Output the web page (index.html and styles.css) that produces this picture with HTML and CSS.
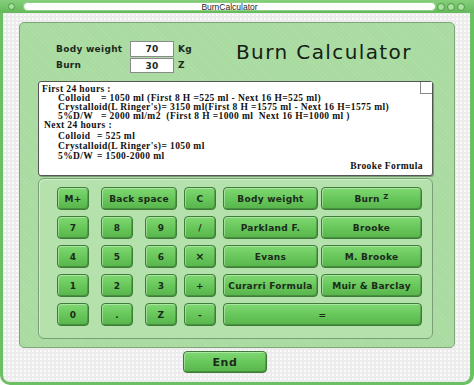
FILE: index.html
```html
<!DOCTYPE html>
<html>
<head>
<meta charset="utf-8">
<link rel="stylesheet" href="styles.css">
</head>
<body>
<div class="window">
  <div class="titlebar">
    <span class="dot"></span>
    <div class="title-pill">BurnCalculator</div>
    <div class="dots"><span class="dot"></span><span class="dot"></span><span class="dot"></span></div>
  </div>
  <div class="client">
    <div class="panel">
      <div class="top">
        <div class="fields">
          <div class="field"><span class="label">Body weight</span><span class="input">70</span><span class="unit">Kg</span></div>
          <div class="field"><span class="label">Burn</span><span class="input">30</span><span class="unit">Z</span></div>
        </div>
        <div class="app-title">Burn Calculator</div>
      </div>
      <div class="output">
        <span class="corner"></span>
        <div class="group g1">
          <div class="line">First 24 hours :</div>
          <div class="line ind"><span class="k1">Colloid</span>= 1050 ml (First 8 H =525 ml - Next 16 H=525 ml)</div>
          <div class="line ind">Crystalloid(L Ringer's)= 3150 ml(First 8 H =1575 ml - Next 16 H=1575 ml)</div>
          <div class="line ind"><span class="k1">5%D/W</span>= 2000 ml/m2&nbsp; (First 8 H =1000 ml&nbsp; Next 16 H=1000 ml )</div>
          <div class="line next">Next 24 hours :</div>
        </div>
        <div class="group g2">
          <div class="line ind"><span class="k2">Colloid</span>= 525 ml</div>
          <div class="line ind">Crystalloid(L Ringer's)= 1050 ml</div>
          <div class="line ind"><span class="k2">5%D/W</span>= 1500-2000 ml</div>
        </div>
        <div class="formula">Brooke Formula</div>
      </div>
      <div class="keypad">
        <button class="btn s">M+</button>
        <button class="btn bs">Back space</button>
        <button class="btn s">C</button>
        <button class="btn b1">Body weight</button>
        <button class="btn b2">Burn <sup>Z</sup></button>

        <button class="btn s">7</button>
        <button class="btn s">8</button>
        <button class="btn s">9</button>
        <button class="btn s">/</button>
        <button class="btn b1">Parkland F.</button>
        <button class="btn b2">Brooke</button>

        <button class="btn s">4</button>
        <button class="btn s">5</button>
        <button class="btn s">6</button>
        <button class="btn s mul">×</button>
        <button class="btn b1">Evans</button>
        <button class="btn b2">M. Brooke</button>

        <button class="btn s">1</button>
        <button class="btn s">2</button>
        <button class="btn s">3</button>
        <button class="btn s">+</button>
        <button class="btn b1">Curarri Formula</button>
        <button class="btn b2">Muir &amp; Barclay</button>

        <button class="btn s">0</button>
        <button class="btn s">.</button>
        <button class="btn s">Z</button>
        <button class="btn s">-</button>
        <button class="btn eq">=</button>
      </div>
    </div>
    <div class="footer"><button class="btn end">End</button></div>
  </div>
</div>
</body>
</html>
```
FILE: styles.css
```css
html, body {
  margin: 0;
  padding: 0;
  background: #ffffff;
}
.window {
  width: 474px;
  height: 385px;
  background: #6dbf63;
  border-radius: 0 0 10px 10px;
  display: flex;
  flex-direction: column;
  overflow: hidden;
}
.titlebar {
  height: 13px;
  display: flex;
  align-items: center;
  background: linear-gradient(#86cf7c, #64b85a);
}
.dot {
  width: 7px;
  height: 7px;
  border-radius: 50%;
  background: #a8e09e;
  border: 1px solid #4f9a47;
  box-sizing: border-box;
  flex: none;
}
.titlebar > .dot {
  margin-left: 8px;
}
.title-pill {
  margin-left: 8px;
  width: 413px;
  height: 9px;
  border-radius: 5px;
  background: #ffffff;
  border: 1px solid #8fcf86;
  box-sizing: border-box;
  font: 8.5px/8px "Liberation Sans", Arial, sans-serif;
  color: #222;
  text-align: center;
}
.dots {
  display: flex;
  gap: 2px;
  margin-left: 1px;
}
.dots .dot {
  width: 8px;
  height: 8px;
}
.client {
  margin: 0 4px 3px 3px;
  flex: 1;
  border-radius: 0 0 7px 7px;
  background-color: #ececec;
  background-image: radial-gradient(circle, #fbfbfb 0.9px, transparent 1.1px);
  background-size: 4px 4px;
  padding: 9px 15px 0 16px;
  box-sizing: border-box;
}
.panel {
  height: 326px;
  box-sizing: border-box;
  border: 1px solid #7ea879;
  border-radius: 5px;
  background-color: #a9dba1;
  background-image: repeating-linear-gradient(45deg, rgba(255,255,255,0.07) 0 1px, transparent 1px 3px);
  padding: 18px 21px 0 18px;
  display: flex;
  flex-direction: column;
}
.top {
  height: 32px;
  display: flex;
}
.fields {
  width: 198px;
  padding-left: 18px;
  box-sizing: border-box;
  display: flex;
  flex-direction: column;
}
.field {
  display: flex;
  align-items: center;
  height: 16px;
  font: bold 9px "DejaVu Sans", Verdana, sans-serif;
  letter-spacing: 0.3px;
  color: #1c2a1c;
}
.label {
  width: 74px;
}
.input {
  width: 44px;
  height: 16px;
  box-sizing: border-box;
  background: #fff;
  border: 1px solid #8a8a8a;
  text-align: center;
  line-height: 14px;
}
.field + .field .input {
  height: 15px;
  margin-top: 1px;
}
.unit {
  margin-left: 4px;
}
.app-title {
  font: 20px/22px "DejaVu Sans", Verdana, sans-serif;
  letter-spacing: 1.4px;
  color: #142014;
}
.output {
  position: relative;
  margin-top: 8px;
  height: 95px;
  box-sizing: border-box;
  background: #fff;
  border: 1px solid #555;
  border-radius: 3px;
  box-shadow: 1px 1px 0 #7d9a79;
  padding: 3px 9px 4px 3px;
  display: flex;
  flex-direction: column;
  font: bold 9.5px "Liberation Serif", "Times New Roman", serif;
  letter-spacing: 0.4px;
  color: #111;
}
.corner {
  position: absolute;
  top: 0;
  right: 0;
  width: 12px;
  height: 12px;
  box-sizing: border-box;
  border-left: 1px solid #888;
  border-bottom: 1px solid #888;
  background: #fff;
}
.line {
  white-space: nowrap;
}
.g1 .line {
  line-height: 9px;
}
.g2 {
  margin-top: 1px;
}
.g2 .line {
  line-height: 10px;
}
.ind {
  padding-left: 16px;
}
.next {
  padding-left: 2px;
}
.k1 {
  display: inline-block;
  width: 43px;
}
.k2 {
  display: inline-block;
  width: 39px;
}
.formula {
  margin-top: auto;
  text-align: right;
  line-height: 10px;
}
.keypad {
  margin-top: 2px;
  height: 161px;
  box-sizing: border-box;
  border: 1px solid #7a9f75;
  border-radius: 6px;
  background-color: #b4e1ac;
  box-shadow: inset 1px 1px 0 #d2efcc;
  padding: 8px 0 0 18px;
  display: grid;
  grid-template-columns: 44px 44px 39px 39px 98px 101px;
  grid-auto-rows: 23px;
  row-gap: 6px;
  align-content: start;
}
.btn {
  height: 23px;
  margin: 0;
  padding: 0;
  box-sizing: border-box;
  border: 1px solid #3f7b39;
  border-radius: 4px;
  background: linear-gradient(#7fd872, #66c659 55%, #58b44c);
  box-shadow: inset 1px 1px 0 rgba(255,255,255,0.35), inset -1px -1px 0 rgba(0,0,0,0.2);
  font: bold 9px "DejaVu Sans", Verdana, sans-serif;
  letter-spacing: 0.3px;
  color: #1c2a1c;
  text-align: center;
  white-space: nowrap;
}
.btn sup {
  font-size: 7px;
  vertical-align: 3px;
  line-height: 0;
}
.mul {
  font-size: 11px;
}
.s { width: 32px; }
.bs { grid-column: span 2; width: 76px; }
.b1 { width: 95px; }
.b2 { width: 101px; }
.eq { grid-column: span 2; width: 199px; }
.footer {
  padding: 3px 0 0 164px;
}
.end {
  width: 84px;
  height: 22px;
  font-size: 11px;
  letter-spacing: 0.6px;
}
```
